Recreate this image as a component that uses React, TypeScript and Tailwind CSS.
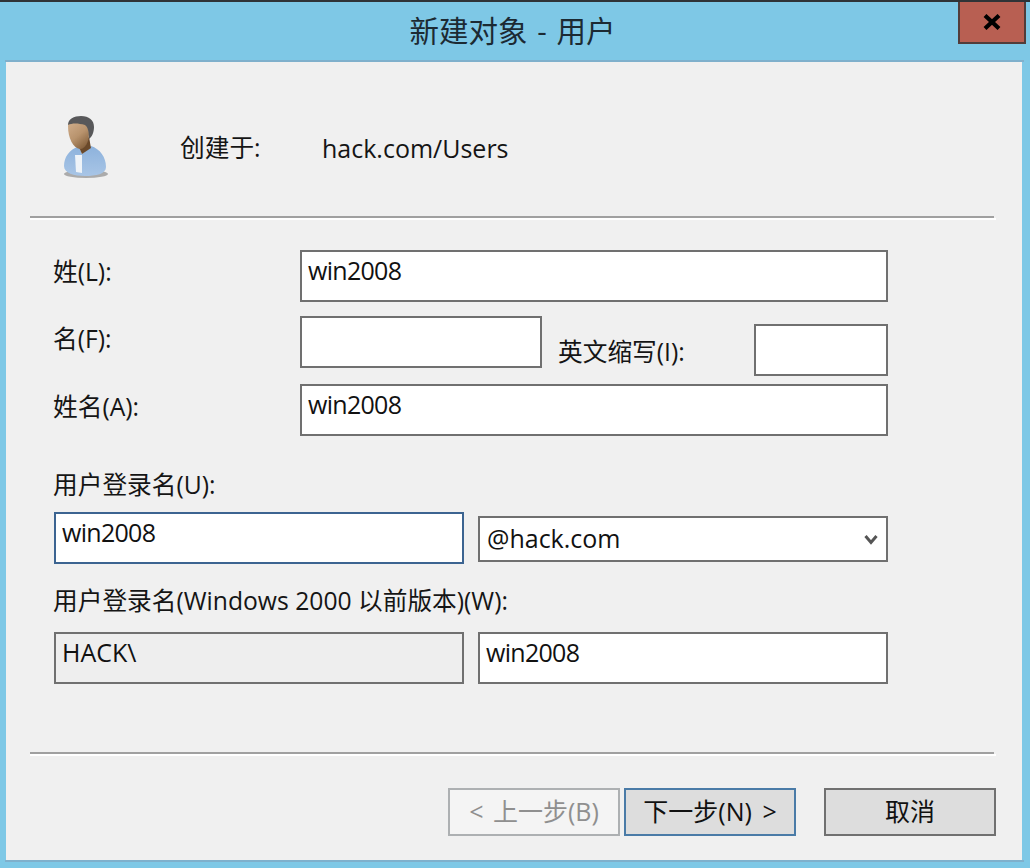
const FONT = "font-['Open_Sans','Noto_Sans_CJK_SC',sans-serif]";

function Box({
  w,
  value,
  className = "bg-white border-[#707070]",
}: {
  w: string;
  value?: string;
  className?: string;
}) {
  return (
    <div className={`${w} h-[52px] shrink-0 border-2 pl-[6px] pt-[3px] text-[25px] leading-[30px] text-[#111] ${className}`}>
      {value}
    </div>
  );
}

function Label({ children, className = "" }: { children: string; className?: string }) {
  return <div className={`h-[30px] shrink-0 text-[24.7px] leading-[30px] text-[#151515] whitespace-nowrap ${className}`}>{children}</div>;
}

function Separator({ className = "" }: { className?: string }) {
  return (
    <div className={`ml-[24px] w-[966px] ${className}`}>
      <div className="h-[2px] w-[964px] bg-[#a0a0a0]" />
      <div className="h-[2px] bg-white" />
    </div>
  );
}

function UserIcon() {
  return (
    <svg width="50" height="70" viewBox="0 0 50 70" className="shrink-0">
      <defs>
        <linearGradient id="skin" x1="0" y1="0" x2="0.6" y2="1">
          <stop offset="0" stopColor="#d2b08e" />
          <stop offset="0.6" stopColor="#b8936d" />
          <stop offset="1" stopColor="#8a6642" />
        </linearGradient>
        <linearGradient id="shirt" x1="0" y1="0" x2="0" y2="1">
          <stop offset="0" stopColor="#8db2dc" />
          <stop offset="1" stopColor="#a8c5e6" />
        </linearGradient>
        <filter id="soft" x="-20%" y="-20%" width="140%" height="140%">
          <feGaussianBlur stdDeviation="0.6" />
        </filter>
      </defs>
      <ellipse cx="26" cy="62" rx="22" ry="4" fill="#8f8f8f" opacity="0.7" filter="url(#soft)" />
      <g filter="url(#soft)">
        <path d="M4 54 C4 45 9 38 19 34 L22 42 L31 34 C40 37 46 45 46 55 C46 62 36 64 25 64 C14 64 4 61 4 54 Z" fill="url(#shirt)" />
        <path d="M18 33 L29 25 L31 36 L22 42 Z" fill="#6b4a2c" />
        <path d="M15 43 L22 43 L22 61 L16 60 Z" fill="#eef3f8" />
        <path d="M8 14 C8 9 13 8 20 9 C27 10 29 15 29 22 C29 30 25 37 20 37 C13 36 8 26 8 14 Z" fill="url(#skin)" />
        <path d="M8 13 C8 7 14 4 21 4 C29 4 34 8 34 15 C34 20 32 25 29 27 C29 20 28 15 25 13 C18 11 12 11 8 13 Z" fill="#58595a" />
      </g>
    </svg>
  );
}

function WizardButton({ children, className }: { children: string; className: string }) {
  return (
    <div className={`h-[48px] w-[172px] shrink-0 border-2 flex items-center justify-center text-[25px] whitespace-nowrap ${className}`}>
      {children}
    </div>
  );
}

export default function App() {
  return (
    <div className={`relative w-[1030px] h-[868px] overflow-hidden bg-[#7ec8e6] border-t-2 border-[#2f3337] ${FONT}`}>
      <div className="h-[58px] flex items-center justify-center pr-[5px] text-[29.5px] text-[#1c2a33] [word-spacing:2px]">
        新建对象 - 用户
      </div>

      <div className="absolute left-[958px] top-0 w-[68px] h-[42px] bg-[#b85f52] border-2 border-t-0 border-[#523c3a] flex items-center justify-center">
        <svg width="18" height="16" viewBox="0 0 18 16">
          <path d="M2 1.5 L16 14.5 M16 1.5 L2 14.5" stroke="#000" strokeWidth="4.2" fill="none" />
        </svg>
      </div>

      <div className="ml-[5px] w-[1019px] border-y-2 border-[#7fb0cc]">
        <div className="ml-[1px] w-[1016px] h-[798px] bg-[#f0f0f0]">
          <div className="h-[154px] pl-[54px] pt-[50px] flex items-start">
            <UserIcon />
            <div className="mt-[21px] ml-[70px] w-[142px]">
              <Label>创建于:</Label>
            </div>
            <div className="mt-[21px] text-[25px] leading-[30px] text-[#151515] whitespace-nowrap">hack.com/Users</div>
          </div>
          <Separator />

          <div className="mt-[30px] pl-[47px] flex items-start">
            <Label className="mt-[7px] w-[247px]">姓(L):</Label>
            <Box w="w-[588px]" value="win2008" className="bg-white border-[#707070] tracking-[-0.7px]" />
          </div>

          <div className="mt-[14px] pl-[47px] flex items-start">
            <Label className="mt-[8px] w-[247px]">名(F):</Label>
            <Box w="w-[242px]" />
            <Label className="mt-[21px] ml-[16px] w-[196px]">英文缩写(I):</Label>
            <Box w="w-[134px]" className="mt-[8px] bg-white border-[#707070]" />
          </div>

          <div className="mt-[8px] pl-[47px] flex items-start">
            <Label className="mt-[8px] w-[247px]">姓名(A):</Label>
            <Box w="w-[588px]" value="win2008" className="bg-white border-[#707070] tracking-[-0.7px]" />
          </div>

          <Label className="mt-[34px] ml-[47px]">用户登录名(U):</Label>
          <div className="mt-[12px] pl-[48px] flex items-start gap-[14px]">
            <Box w="w-[410px]" value="win2008" className="bg-white border-[#3c6491] tracking-[-0.7px]" />
            <div className="mt-[4px] w-[410px] h-[46px] shrink-0 border-2 border-[#707070] bg-white pl-[7px] pr-[8px] flex items-center justify-between text-[25px] text-[#111]">
              <span>@hack.com</span>
              <svg width="14" height="11" viewBox="0 0 14 11">
                <path d="M1.5 2 L7 8.5 L12.5 2" stroke="#555" strokeWidth="3" fill="none" />
              </svg>
            </div>
          </div>

          <Label className="mt-[22px] ml-[47px]">用户登录名(Windows 2000 以前版本)(W):</Label>
          <div className="mt-[16px] pl-[48px] flex items-start gap-[14px]">
            <Box w="w-[410px]" value="HACK\" className="bg-[#eeeeee] border-[#707070]" />
            <Box w="w-[410px]" value="win2008" className="bg-white border-[#707070] tracking-[-0.7px]" />
          </div>

          <Separator className="mt-[68px]" />

          <div className="mt-[32px] pl-[442px] flex items-start">
            <WizardButton className="bg-[#f4f4f4] border-[#adb0b2] text-[#8f8f8f] [word-spacing:3px]">{"< 上一步(B)"}</WizardButton>
            <WizardButton className="ml-[4px] bg-[#dddddd] border-[#4a7ba7] text-[#111] [word-spacing:4px]">{"下一步(N) >"}</WizardButton>
            <WizardButton className="ml-[28px] bg-[#dddddd] border-[#707070] text-[#111]">取消</WizardButton>
          </div>
        </div>
      </div>
    </div>
  );
}
